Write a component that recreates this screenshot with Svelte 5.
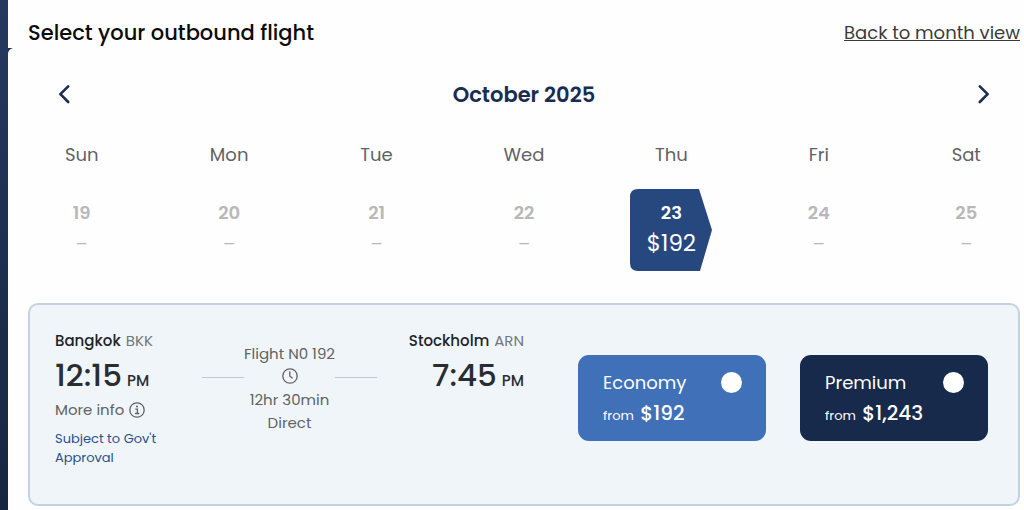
<script>
  const days = [
    { name: 'Sun', date: 19 },
    { name: 'Mon', date: 20 },
    { name: 'Tue', date: 21 },
    { name: 'Wed', date: 22 },
    { name: 'Thu', date: 23, price: '$192' },
    { name: 'Fri', date: 24 },
    { name: 'Sat', date: 25 }
  ];
  const fares = [
    { id: 'economy', name: 'Economy', price: '$192' },
    { id: 'premium', name: 'Premium', price: '$1,243' }
  ];
  let fare = $state('');
</script>

<div class="page">
  <main>
    <svg class="notch" viewBox="0 0 5 5" aria-hidden="true"><path d="M0 0h5Q1 1 0 5z" fill="#22355b" /></svg>
    <header>
      <h1>Select your outbound flight</h1>
      <a href="#month">Back to month view</a>
    </header>

    <div class="month">
      <button class="arrow" aria-label="Previous week">
        <svg viewBox="0 0 12 20"><path d="M10.2 2.4L2.4 10.2L10.2 18" /></svg>
      </button>
      <h2>October 2025</h2>
      <button class="arrow" aria-label="Next week">
        <svg viewBox="0 0 12 20"><path d="M1.8 2.4L9.6 10.2L1.8 18" /></svg>
      </button>
    </div>

    <div class="week">
      {#each days as day}
        <div class="day">
          <span class="name">{day.name}</span>
          <button class="date" class:selected={day.price} disabled={!day.price}>
            {#if day.price}
              <svg class="tag" viewBox="0 0 82 82" preserveAspectRatio="none" aria-hidden="true">
                <path d="M8 0H69L82 41L70 82H8Q0 82 0 74V8Q0 0 8 0z" fill="#27487f" />
              </svg>
            {/if}
            <strong>{day.date}</strong>
            <span class="price">{day.price ?? '–'}</span>
          </button>
        </div>
      {/each}
    </div>

    <section class="flight">
      <div class="stop">
        <div class="city"><b>Bangkok</b> BKK</div>
        <div class="time"><span>12:15</span><small>PM</small></div>
        <button class="more">
          More info
          <svg viewBox="0 0 16 16" fill="none" stroke="#606264" stroke-width="1.3" aria-hidden="true">
            <circle cx="8" cy="8" r="7.2" />
            <path d="M6.3 7.1H8.4V11.4M6 11.5H10.3" />
            <circle cx="8" cy="4.5" r="1" fill="#606264" stroke="none" />
          </svg>
        </button>
        <p>Subject to Gov't Approval</p>
      </div>

      <div class="route">
        <i></i>
        <div class="details">
          <span>Flight N0 192</span>
          <svg viewBox="0 0 16 16" fill="none" stroke="#606264" stroke-width="1.3" aria-hidden="true">
            <circle cx="8" cy="8" r="7.2" />
            <path d="M7.8 3.3V8.2L10.6 10.3" />
          </svg>
          <span>12hr 30min</span>
          <span>Direct</span>
        </div>
        <i></i>
      </div>

      <div class="stop arrival">
        <div class="city"><b>Stockholm</b> ARN</div>
        <div class="time"><span>7:45</span><small>PM</small></div>
      </div>

      <div class="fares">
        {#each fares as item}
          <label class={item.id}>
            <span class="fare-name">{item.name}</span>
            <input type="radio" name="fare" value={item.id} bind:group={fare} />
            <span class="fare-price">from <b>{item.price}</b></span>
          </label>
        {/each}
      </div>
    </section>
  </main>
</div>

<style>
  :global(body) {
    background: #fff;
  }
  .page {
    box-sizing: border-box;
    min-height: 100vh;
    padding-left: 8px;
    overflow: hidden;
    background: linear-gradient(#253960, #162640);
    font-family: Poppins, Inter, sans-serif;
    color: #606264;
  }
  main {
    box-sizing: border-box;
    position: relative;
    min-height: 100vh;
    padding: 0 4px 4px 20px;
    background: #fefefe;
  }
  .notch {
    position: absolute;
    left: 0;
    top: 48px;
    width: 5px;
    height: 5px;
  }
  header {
    display: flex;
    align-items: center;
    justify-content: space-between;
    height: 64px;
  }
  h1, h2, p {
    margin: 0;
  }
  h1 {
    font-size: 21px;
    font-weight: 500;
    color: #0b0b0b;
  }
  a {
    font-size: 18px;
    color: #3b3b3b;
    text-underline-offset: 1px;
    text-decoration-skip-ink: none;
  }
  button {
    padding: 0;
    border: 0;
    background: none;
    font: inherit;
    color: inherit;
  }
  .month {
    display: flex;
    align-items: center;
    justify-content: space-between;
    height: 60px;
    padding: 0 30px;
  }
  h2 {
    font-size: 21px;
    font-weight: 600;
    color: #1a2c50;
  }
  .arrow svg {
    display: block;
    width: 12px;
    height: 20px;
    fill: none;
    stroke: #1a2c50;
    stroke-width: 2.6;
    stroke-linecap: round;
    stroke-linejoin: round;
  }
  .week {
    display: grid;
    grid-template-columns: repeat(7, 1fr);
    margin: 19px -20px 0;
  }
  .day {
    display: flex;
    flex-direction: column;
    align-items: center;
    gap: 22px;
  }
  .name {
    font-size: 18px;
    line-height: 24px;
  }
  .date {
    position: relative;
    display: flex;
    flex-direction: column;
    align-items: center;
    box-sizing: border-box;
    width: 82px;
    height: 82px;
    padding-top: 8px;
    color: #b8b8b8;
  }
  .date strong {
    position: relative;
    font-size: 18px;
    font-weight: 600;
    line-height: 31px;
  }
  .price {
    position: relative;
    font-size: 18px;
    line-height: 31px;
  }
  .selected {
    color: #fff;
  }
  .selected .price {
    font-size: 23px;
  }
  .tag {
    position: absolute;
    inset: 0;
    width: 100%;
    height: 100%;
  }
  .flight {
    display: grid;
    grid-template-columns: minmax(0, 147fr) minmax(0, 175fr) minmax(0, 147fr) minmax(0, 464fr);
    align-items: start;
    box-sizing: border-box;
    min-height: 203px;
    margin-top: 32px;
    padding: 24px 30px 34px 25px;
    border: 2px solid #c3d2e1;
    border-radius: 10px;
    background: #f0f5fa;
  }
  .stop {
    white-space: nowrap;
  }
  .city {
    font-size: 15px;
    line-height: 24px;
    color: #74787c;
  }
  .city b {
    margin-right: 1px;
    font-weight: 500;
    color: #202327;
  }
  .time {
    display: flex;
    align-items: baseline;
    gap: 5px;
    height: 44px;
    font-size: 31px;
    font-weight: 500;
    line-height: 44px;
    color: #292d32;
  }
  .time small {
    font-size: 15px;
    line-height: 20px;
  }
  .more {
    display: flex;
    align-items: center;
    gap: 5px;
    font-size: 15px;
    line-height: 26px;
  }
  .more svg, .details svg {
    width: 16px;
    height: 16px;
  }
  .stop p {
    width: 110px;
    margin-top: 6px;
    font-size: 13px;
    line-height: 19px;
    white-space: normal;
    color: #2b4f8c;
  }
  .arrival {
    display: flex;
    flex-direction: column;
    align-items: flex-end;
  }
  .route {
    display: grid;
    grid-template-columns: 1fr auto 1fr;
    padding-top: 13px;
  }
  .route i {
    height: 1px;
    margin-top: 35px;
    background: #b9c9df;
  }
  .details {
    display: flex;
    flex-direction: column;
    align-items: center;
    font-size: 15px;
    line-height: 23px;
    white-space: nowrap;
  }
  .details svg {
    margin: 3px 0 4px;
  }
  .fares {
    display: grid;
    grid-template-columns: 1fr 1fr;
    gap: 34px;
    padding: 26px 0 0 54px;
  }
  label {
    display: grid;
    grid-template-columns: 1fr auto;
    align-items: center;
    align-content: center;
    box-sizing: border-box;
    height: 86px;
    padding: 1px 24px 0 25px;
    border-radius: 11px;
    color: #fff;
    white-space: nowrap;
  }
  .economy {
    background: #4070b7;
  }
  .premium {
    background: #182a4b;
  }
  .fare-name {
    font-size: 18px;
    line-height: 31px;
  }
  input {
    appearance: none;
    width: 21px;
    height: 21px;
    margin: 0;
    border-radius: 50%;
    background: #fff;
  }
  input:checked {
    border: 6px solid #fff;
    background: #182a4b;
  }
  .fare-price {
    grid-column: 1 / -1;
    font-size: 13px;
    line-height: 31px;
  }
  .fare-price b {
    margin-left: 3px;
    font-size: 20px;
    font-weight: 500;
  }
</style>
